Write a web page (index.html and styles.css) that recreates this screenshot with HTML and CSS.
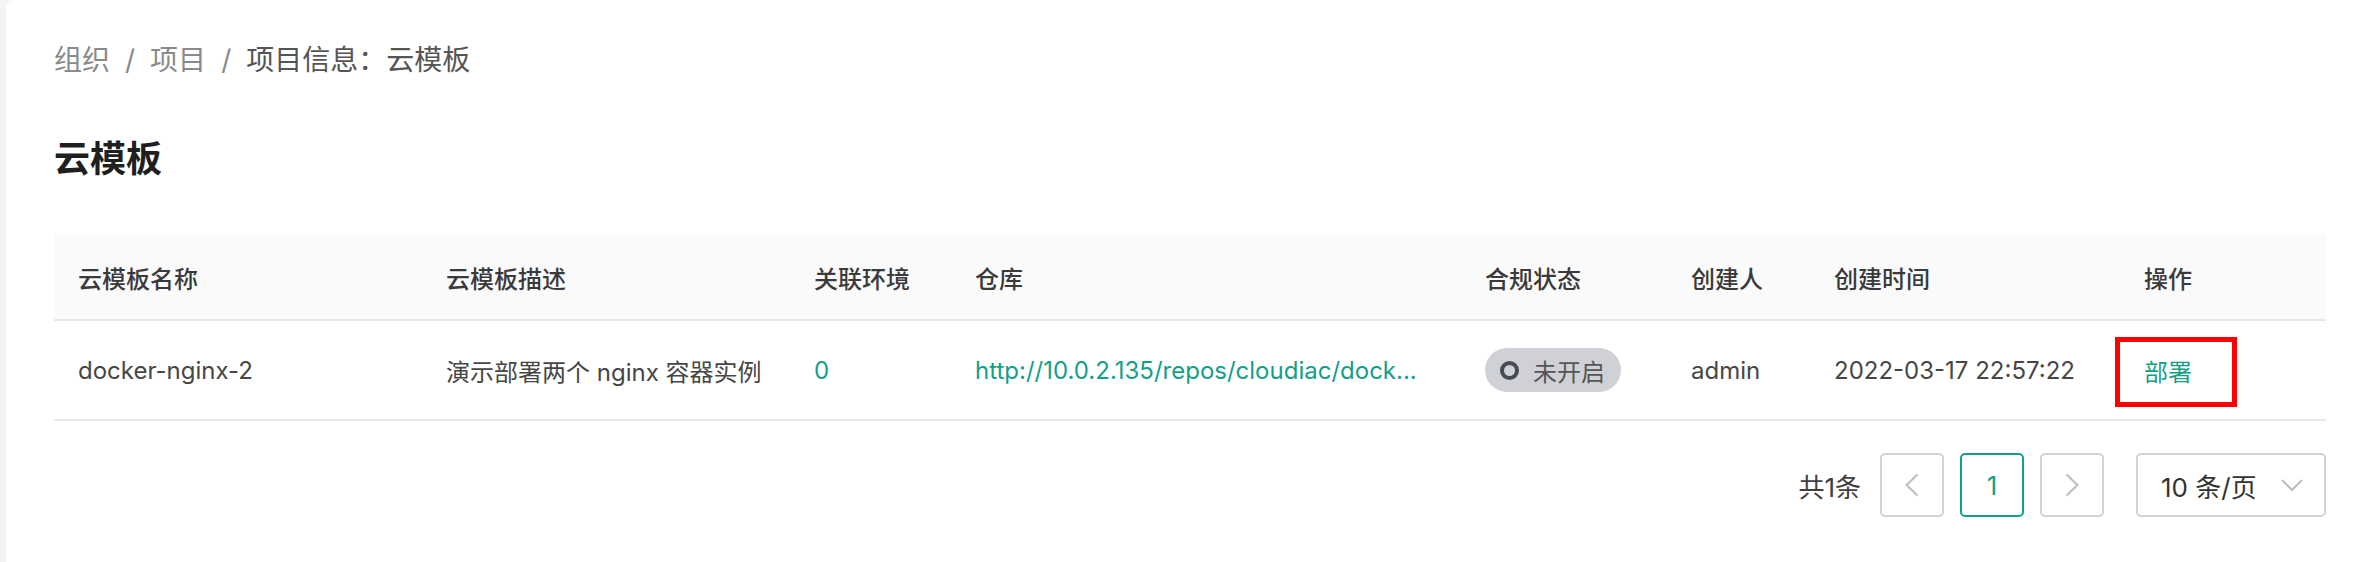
FILE: index.html
```html
<!DOCTYPE html>
<html lang="zh-CN">
<head>
<meta charset="utf-8">
<title>云模板</title>
<link rel="stylesheet" href="styles.css">
</head>
<body>
<div class="page">
  <nav class="breadcrumb">
    <span class="crumb link">组织</span><span class="sep">/</span><span class="crumb link">项目</span><span class="sep">/</span><span class="crumb current">项目信息：云模板</span>
  </nav>
  <h1 class="title">云模板</h1>
  <table class="grid">
    <colgroup>
      <col class="c1"><col class="c2"><col class="c3"><col class="c4"><col class="c5"><col class="c6"><col class="c7"><col class="c8">
    </colgroup>
    <thead>
      <tr>
        <th>云模板名称</th>
        <th>云模板描述</th>
        <th>关联环境</th>
        <th>仓库</th>
        <th>合规状态</th>
        <th>创建人</th>
        <th>创建时间</th>
        <th>操作</th>
      </tr>
    </thead>
    <tbody>
      <tr>
        <td>docker-nginx-2</td>
        <td>演示部署两个 nginx 容器实例</td>
        <td><a class="teal">0</a></td>
        <td class="clip"><a class="teal">http://10.0.2.135/repos/cloudiac/dock...</a></td>
        <td><span class="pill"><span class="ring"></span>未开启</span></td>
        <td>admin</td>
        <td>2022-03-17 22:57:22</td>
        <td class="ops"><a class="teal">部署</a><span class="annot"></span></td>
      </tr>
    </tbody>
  </table>
  <div class="pager">
    <span class="total">共1条</span>
    <span class="pbtn">
      <svg width="14" height="24" viewBox="0 0 14 24"><polyline points="12.5,1.5 1.5,12 12.5,22.5" fill="none" stroke="#bdbdbd" stroke-width="2"/></svg>
    </span>
    <span class="pbtn active">1</span>
    <span class="pbtn">
      <svg width="14" height="24" viewBox="0 0 14 24"><polyline points="1.5,1.5 12.5,12 1.5,22.5" fill="none" stroke="#bdbdbd" stroke-width="2"/></svg>
    </span>
    <span class="psize">
      <span>10 条/页</span>
      <svg width="22" height="12" viewBox="0 0 22 12"><polyline points="1,1 11,11 21,1" fill="none" stroke="#bdbdbd" stroke-width="2"/></svg>
    </span>
  </div>
</div>
</body>
</html>
```
FILE: styles.css
```css
html, body {
  margin: 0;
  padding: 0;
}
body {
  background: #f2f5f7;
  font-family: "Inter", "Noto Sans CJK SC", sans-serif;
  color: #444;
}
.page {
  margin-left: 6px;
  height: 562px;
  box-sizing: border-box;
  background: #fff;
  border-top-left-radius: 7px;
  padding: 40px 42px 0 48px;
}
.breadcrumb {
  font-size: 28px;
  line-height: 40px;
  height: 40px;
  white-space: nowrap;
}
.crumb.link, .sep {
  color: #8a8a8a;
}
.crumb.current {
  color: #555;
}
.sep {
  margin: 0 15px;
}
.title {
  margin: 54px 0 0;
  font-size: 36px;
  line-height: 50px;
  font-weight: 700;
  color: #1f1f1f;
}
.grid {
  margin-top: 51px;
  width: 2272px;
  table-layout: fixed;
  border-collapse: collapse;
  border-spacing: 0;
  font-size: 24px;
}
.c1 { width: 368px; }
.c2 { width: 368px; }
.c3 { width: 161px; }
.c4 { width: 510px; }
.c5 { width: 206px; }
.c6 { width: 143px; }
.c7 { width: 310px; }
.c8 { width: 206px; }
.grid th {
  height: 84px;
  padding: 0 24px;
  background: #fafafa;
  border-bottom: 2px solid #e8e8e8;
  text-align: left;
  font-weight: 500;
  color: #3a3a3a;
}
.grid td {
  height: 98px;
  padding: 0 24px;
  border-bottom: 2px solid #e8e8e8;
  color: #464646;
  white-space: nowrap;
}
.clip {
  overflow: hidden;
}
.teal {
  color: #13a089;
  text-decoration: none;
}
.pill {
  display: inline-flex;
  align-items: center;
  gap: 14px;
  height: 44px;
  padding: 0 16px 0 15px;
  border-radius: 22px;
  background: #d0d1d6;
  color: #555;
  vertical-align: middle;
}
.ring {
  width: 19px;
  height: 19px;
  box-sizing: border-box;
  border: 4px solid #474c54;
  border-radius: 50%;
}
.ops {
  position: relative;
}
.annot {
  position: absolute;
  left: -5px;
  top: 16px;
  width: 122px;
  height: 70px;
  box-sizing: border-box;
  border: 5px solid #ff0000;
}
.pager {
  margin-top: 32px;
  width: 2272px;
  display: flex;
  justify-content: flex-end;
  align-items: center;
  gap: 16px;
  font-size: 26px;
  color: #404040;
}
.total {
  margin-right: 3px;
}
.pbtn {
  width: 64px;
  height: 64px;
  box-sizing: border-box;
  border: 2px solid #d2d2d2;
  border-radius: 5px;
  display: flex;
  align-items: center;
  justify-content: center;
}
.pbtn.active {
  border-color: #13a089;
  color: #13a089;
}
.psize {
  margin-left: 16px;
  width: 190px;
  height: 64px;
  box-sizing: border-box;
  border: 2px solid #d2d2d2;
  border-radius: 5px;
  display: flex;
  align-items: center;
  justify-content: space-between;
  padding: 0 21px 0 23px;
  color: #333;
}
```
